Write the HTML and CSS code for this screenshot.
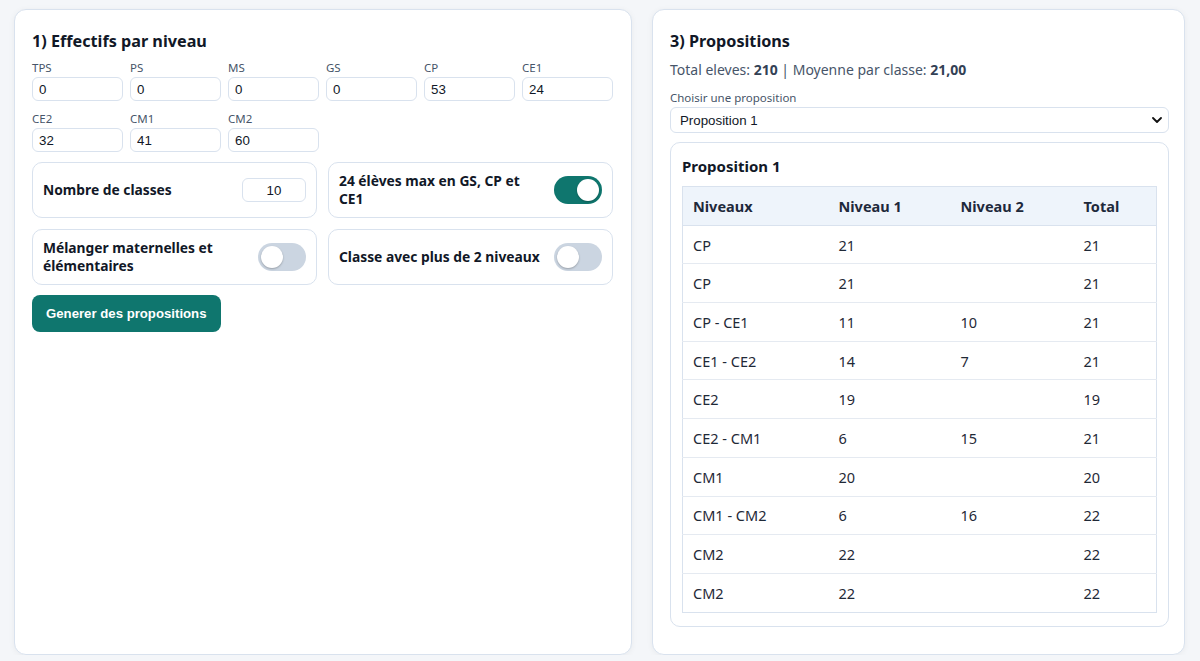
FILE: index.html
```html
<!DOCTYPE html>
<html lang="fr">
<head>
<meta charset="utf-8">
<title>Répartition des classes</title>
<link rel="stylesheet" href="styles.css">
</head>
<body>
<main class="layout">
  <section class="card card-left">
    <h2 class="card-title">1) Effectifs par niveau</h2>
    <div class="levels">
      <label class="field"><span class="field-label">TPS</span><input class="field-input" type="text" value="0"></label>
      <label class="field"><span class="field-label">PS</span><input class="field-input" type="text" value="0"></label>
      <label class="field"><span class="field-label">MS</span><input class="field-input" type="text" value="0"></label>
      <label class="field"><span class="field-label">GS</span><input class="field-input" type="text" value="0"></label>
      <label class="field"><span class="field-label">CP</span><input class="field-input" type="text" value="53"></label>
      <label class="field"><span class="field-label">CE1</span><input class="field-input" type="text" value="24"></label>
      <label class="field"><span class="field-label">CE2</span><input class="field-input" type="text" value="32"></label>
      <label class="field"><span class="field-label">CM1</span><input class="field-input" type="text" value="41"></label>
      <label class="field"><span class="field-label">CM2</span><input class="field-input" type="text" value="60"></label>
    </div>
    <div class="options">
      <div class="option">
        <span class="option-label">Nombre de classes</span>
        <input class="small-input" type="text" value="10">
      </div>
      <div class="option">
        <span class="option-label">24 élèves max en GS, CP et CE1</span>
        <span class="toggle toggle-on"><span class="knob"></span></span>
      </div>
      <div class="option">
        <span class="option-label">Mélanger maternelles et élémentaires</span>
        <span class="toggle"><span class="knob"></span></span>
      </div>
      <div class="option">
        <span class="option-label">Classe avec plus de 2 niveaux</span>
        <span class="toggle"><span class="knob"></span></span>
      </div>
    </div>
    <button class="primary-btn" type="button">Generer des propositions</button>
  </section>

  <section class="card card-right">
    <h2 class="card-title">3) Propositions</h2>
    <p class="summary">Total eleves: <strong>210</strong> | Moyenne par classe: <strong>21,00</strong></p>
    <label class="select-label">Choisir une proposition</label>
    <div class="select">
      <span>Proposition 1</span>
      <svg class="chevron" viewBox="0 0 10 6" width="10" height="6"><path d="M1 1l4 4 4-4" fill="none" stroke="#111" stroke-width="1.8" stroke-linecap="round" stroke-linejoin="round"/></svg>
    </div>
    <div class="proposal">
      <h3 class="proposal-title">Proposition 1</h3>
      <table class="table">
        <colgroup><col class="c1"><col class="c2"><col class="c3"><col></colgroup>
        <thead>
          <tr><th>Niveaux</th><th>Niveau 1</th><th>Niveau 2</th><th>Total</th></tr>
        </thead>
        <tbody>
          <tr><td>CP</td><td>21</td><td></td><td>21</td></tr>
          <tr><td>CP</td><td>21</td><td></td><td>21</td></tr>
          <tr><td>CP - CE1</td><td>11</td><td>10</td><td>21</td></tr>
          <tr><td>CE1 - CE2</td><td>14</td><td>7</td><td>21</td></tr>
          <tr><td>CE2</td><td>19</td><td></td><td>19</td></tr>
          <tr><td>CE2 - CM1</td><td>6</td><td>15</td><td>21</td></tr>
          <tr><td>CM1</td><td>20</td><td></td><td>20</td></tr>
          <tr><td>CM1 - CM2</td><td>6</td><td>16</td><td>22</td></tr>
          <tr><td>CM2</td><td>22</td><td></td><td>22</td></tr>
          <tr><td>CM2</td><td>22</td><td></td><td>22</td></tr>
        </tbody>
      </table>
    </div>
  </section>
</main>
</body>
</html>
```

FILE: styles.css
```css
* { box-sizing: border-box; }

html, body {
  margin: 0;
  padding: 0;
  background: #f4f6f9;
  color: #111827;
  font-family: "Segoe UI", "Noto Sans", sans-serif;
}

.layout {
  display: grid;
  grid-template-columns: 618px 533px;
  gap: 20px;
  padding: 9px 15px 0 14px;
  height: 655px;
}

.card {
  background: #ffffff;
  border: 1px solid #d9e2ee;
  border-radius: 12px;
  box-shadow: 0 1px 6px rgba(15, 23, 42, 0.05);
}

.card-left {
  padding: 17px 18px 17px 17px;
}

.card-right {
  padding: 17px 15px 17px 17px;
}

.card-title {
  margin: 0 0 5px;
  font-size: 16.2px;
  font-weight: 700;
  line-height: 28px;
}

.levels {
  display: grid;
  grid-template-columns: repeat(6, 1fr);
  column-gap: 7px;
  row-gap: 10px;
}

.field {
  display: flex;
  flex-direction: column;
}

.field-label {
  font-size: 11.5px;
  color: #475569;
  line-height: 15px;
  margin-bottom: 2px;
}

.field-input {
  height: 24px;
  width: 100%;
  border: 1px solid #d9e2ee;
  border-radius: 6px;
  padding: 2px 6px;
  font-family: "Liberation Sans", Arial, sans-serif;
  font-size: 13.3px;
  color: #111827;
  background: #fff;
}

.options {
  display: grid;
  grid-template-columns: 1fr 1fr;
  gap: 11px;
  margin-top: 10px;
}

.option {
  display: flex;
  align-items: center;
  justify-content: space-between;
  gap: 10px;
  height: 56px;
  border: 1px solid #d9e2ee;
  border-radius: 10px;
  padding: 0 10px;
}

.option-label {
  font-size: 13.8px;
  font-weight: 700;
  line-height: 18px;
  color: #111827;
}

.small-input {
  width: 64px;
  height: 24px;
  border: 1px solid #d9e2ee;
  border-radius: 6px;
  text-align: center;
  font-family: "Liberation Sans", Arial, sans-serif;
  font-size: 13.3px;
  color: #111827;
}

.toggle {
  flex: none;
  width: 48px;
  height: 28px;
  border-radius: 14px;
  background: #cbd5e1;
  padding: 3px;
  display: flex;
  justify-content: flex-start;
}

.toggle-on {
  background: #0f766e;
  justify-content: flex-end;
}

.knob {
  width: 22px;
  height: 22px;
  border-radius: 50%;
  background: #fff;
  box-shadow: 0 1px 2px rgba(0, 0, 0, 0.25);
}

.primary-btn {
  margin-top: 10px;
  height: 37px;
  padding: 0 14px;
  border: none;
  border-radius: 8px;
  background: #0f766e;
  color: #fff;
  font-family: "Liberation Sans", Arial, sans-serif;
  font-weight: 700;
  font-size: 13.2px;
}

.summary {
  margin: 0 0 10px;
  font-size: 14px;
  color: #475569;
  line-height: 20px;
}

.summary strong {
  color: #334155;
}

.select-label {
  display: block;
  font-size: 11.5px;
  color: #475569;
  line-height: 15px;
  margin-bottom: 2px;
}

.select {
  height: 26px;
  display: flex;
  align-items: center;
  justify-content: space-between;
  border: 1px solid #d9e2ee;
  border-radius: 6px;
  padding: 0 6px 0 9px;
  font-family: "Liberation Sans", Arial, sans-serif;
  font-size: 13.3px;
  color: #111827;
}

.proposal {
  margin-top: 9px;
  border: 1px solid #d9e2ee;
  border-radius: 10px;
  padding: 12px 11px 13px;
}

.proposal-title {
  margin: 0 0 9px;
  font-size: 15px;
  font-weight: 700;
  line-height: 22px;
}

.table {
  width: 100%;
  border-collapse: collapse;
  border: 1px solid #d9e2ee;
  font-size: 14.5px;
  color: #1f2937;
}

.c1 { width: 146px; }
.c2 { width: 122px; }
.c3 { width: 123px; }

.table th,
.table td {
  text-align: left;
  padding: 0 10px;
  height: 38.7px;
  border-bottom: 1px solid #e5eaf1;
}

.table th {
  background: #eef4fb;
  font-weight: 700;
  color: #1e293b;
  border-bottom: 1px solid #d9e2ee;
}

.table tbody tr:last-child td {
  border-bottom: none;
}
```
